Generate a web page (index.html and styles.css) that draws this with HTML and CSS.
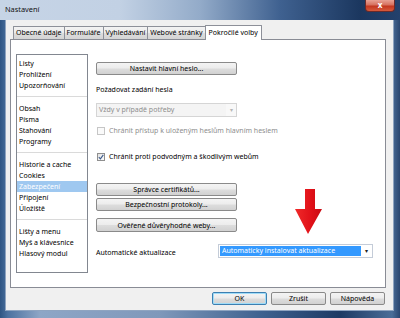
FILE: index.html
```html
<!doctype html>
<html lang="cs">
    <head>
        <meta charset="utf-8">
        <title>Nastavení</title>
        <link rel="stylesheet" href="styles.css">
    </head>
    <body>
        <div class="window">
            <div class="titlebar">
                <span class="title">Nastavení</span>
                <span class="close">x</span>
            </div>
            <div class="client">
                <div class="tabs">
                    <span class="tab">Obecné údaje</span>
                    <span class="tab">Formuláře</span>
                    <span class="tab">Vyhledávání</span>
                    <span class="tab">Webové stránky</span>
                    <span class="tab active">Pokročilé volby</span>
                </div>
                <div class="panel">
                    <ul class="categories">
                        <li>Listy</li>
                        <li>Prohlížení</li>
                        <li>Upozorňování</li>
                        <li class="sep"></li>
                        <li>Obsah</li>
                        <li>Písma</li>
                        <li>Stahování</li>
                        <li>Programy</li>
                        <li class="sep"></li>
                        <li>Historie a cache</li>
                        <li>Cookies</li>
                        <li class="selected">Zabezpečení</li>
                        <li>Připojení</li>
                        <li>Úložiště</li>
                        <li class="sep"></li>
                        <li>Lišty a menu</li>
                        <li>Myš a klávesnice</li>
                        <li>Hlasový modul</li>
                    </ul>
                    <div class="settings">
                        <button class="btn btn-master">Nastavit hlavní heslo...</button>
                        <div class="label label-ask">Požadovat zadání hesla</div>
                        <div class="select disabled">
                            <span class="select-text">Vždy v případě potřeby</span>
                            <span class="select-arrow">&#9662;</span>
                        </div>
                        <div class="check disabled check-protect">
                            <span class="box"></span>
                            <span>Chránit přístup k uloženým heslům hlavním heslem</span>
                        </div>
                        <div class="check check-web">
                            <span class="box checked">
                                <svg width="6" height="6" viewBox="0 0 6 6"><path d="M0.8 3.2 L2.4 4.8 L5.3 0.9" fill="none" stroke="#3c5a8c" stroke-width="1.1"/></svg>
                            </span>
                            <span>Chránit proti podvodným a škodlivým webům</span>
                        </div>
                        <button class="btn btn-certs">Správce certifikátů...</button>
                        <button class="btn btn-protocols">Bezpečnostní protokoly...</button>
                        <button class="btn btn-trusted">Ověřené důvěryhodné weby...</button>
                        <div class="update-row">
                            <span class="label">Automatické aktualizace</span>
                            <div class="select active">
                                <span class="select-text">Automaticky instalovat aktualizace</span>
                                <span class="select-arrow">&#9662;</span>
                            </div>
                        </div>
                    </div>
                    <svg class="arrow" width="30" height="48" viewBox="0 0 30 48">
                        <defs>
                            <linearGradient id="red" x1="0" y1="0" x2="1" y2="0">
                                <stop offset="0" stop-color="#f02a2a"/>
                                <stop offset="0.6" stop-color="#e01018"/>
                                <stop offset="1" stop-color="#c80a12"/>
                            </linearGradient>
                        </defs>
                        <path d="M11 1 L21 1 L21 21 L28 21 L14 46 L1 21 L11 21 Z" fill="url(#red)"/>
                    </svg>
                </div>
                <div class="actions">
                    <button class="btn btn-default">OK</button>
                    <button class="btn">Zrušit</button>
                    <button class="btn">Nápověda</button>
                </div>
            </div>
        </div>
    </body>
</html>
```

FILE: styles.css
```css
html, body{
    margin: 0px;
    padding: 0px;
    width: 400px;
    height: 318px;
    overflow: hidden;
}
body{
    font-family: "Noto Sans", "Open Sans", sans-serif;
    font-size: 7px;
    color: #000;
}
.window{
    width: 400px;
    height: 318px;
    box-sizing: border-box;
    padding: 0px 7px 8px 6px;
    background: linear-gradient(90deg, #2f5583 0%, #4d72a0 2%, #8ea6c6 10%, #7f98ba 40%, #3f6290 65%, #1d3a64 85%, #4a6d98 98%, #2a4670 100%);
    display: flex;
    flex-direction: column;
}
.titlebar{
    height: 20px;
    position: relative;
    margin: 0px -7px 0px -6px;
    background: linear-gradient(90deg, #c6d4e6 0%, #c2d1e4 30%, #93abc9 50%, #3f6190 70%, #1b375f 90%, #23416c 100%);
}
.title{
    position: absolute;
    left: 5px;
    top: 4px;
    font-size: 7.4px;
    color: #111;
}
.close{
    position: absolute;
    left: 365px;
    top: 0px;
    width: 30px;
    height: 12px;
    border: 1px solid #6a2a2a;
    border-top: none;
    border-radius: 0px 0px 4px 4px;
    box-sizing: border-box;
    background: linear-gradient(#e8a194 0%, #d6705e 45%, #c3361f 55%, #d65a3c 100%);
    color: #fff;
    font-size: 8px;
    font-weight: bold;
    text-align: center;
    line-height: 10px;
}
.client{
    flex: 1;
    background: #f0f0f0;
    box-sizing: border-box;
    padding: 5px 7px 0px 4px;
    display: flex;
    flex-direction: column;
    box-shadow: 0px 0px 0px 1px #8fa4c0;
}
.tabs{
    display: flex;
    align-items: flex-end;
    height: 14px;
    padding-left: 3px;
    position: relative;
    z-index: 1;
}
.tab{
    height: 13px;
    box-sizing: border-box;
    border: 1px solid #8d9099;
    border-bottom: none;
    margin-right: -1px;
    padding: 0px 2px;
    line-height: 12px;
    background: linear-gradient(#f3f3f3 0%, #ebebeb 50%, #dddddd 51%, #d4d4d4 100%);
    border-radius: 1px 1px 0px 0px;
}
.tab.active{
    height: 15px;
    margin-bottom: -1px;
    background: #fff;
    padding: 0px 3px;
    line-height: 13px;
}
.panel{
    height: 249px;
    box-sizing: border-box;
    border: 1px solid #898c95;
    background: #fff;
    display: flex;
    align-items: flex-start;
    padding-left: 5px;
    position: relative;
}
.categories{
    list-style: none;
    margin: 14px 0px 0px 0px;
    padding: 3px 0px 0px 0px;
    width: 72px;
    height: 219px;
    box-sizing: border-box;
    border: 1px solid #828790;
}
.categories li{
    height: 11px;
    line-height: 11px;
    padding-left: 2px;
    white-space: nowrap;
}
.categories li.sep{
    height: 12px;
    position: relative;
}
.categories li.sep::after{
    content: "";
    position: absolute;
    left: 0px;
    right: 0px;
    top: 5px;
    border-top: 1px solid #dadada;
}
.categories li.selected{
    background: #9fc8f0;
    color: #fff;
}
.settings{
    margin: 22px 0px 0px 8px;
    display: flex;
    flex-direction: column;
    width: 277px;
}
.btn{
    font-family: inherit;
    font-size: 7px;
    color: #000;
    height: 13px;
    padding: 0px;
    box-sizing: border-box;
    border: 1px solid #8a8a8a;
    border-radius: 2px;
    background: linear-gradient(#f4f4f4 0%, #ececec 48%, #dddddd 52%, #d1d1d1 100%);
    line-height: 11px;
    -webkit-appearance: none;
}
.settings .btn{
    width: 141px;
}
.label{
    line-height: 11px;
}
.label-ask{
    margin-top: 9px;
}
.select{
    height: 14px;
    box-sizing: border-box;
    display: flex;
    align-items: center;
    border: 1px solid #c9c9c9;
    line-height: 12px;
}
.select.disabled{
    margin-top: 8px;
    width: 141px;
    color: #8e8e8e;
    background: #f4f4f4;
    border-color: #d5d5d5;
}
.select-text{
    flex: 1;
    padding-left: 2px;
    white-space: nowrap;
}
.select-arrow{
    width: 10px;
    text-align: center;
    font-size: 6px;
    color: #222;
}
.select.disabled .select-arrow{
    color: #b5b5b5;
    background: #f8f8f8;
    align-self: stretch;
    line-height: 12px;
}
.check{
    display: flex;
    align-items: center;
    gap: 4px;
    line-height: 11px;
    padding-left: 1px;
    white-space: nowrap;
}
.check.disabled{
    color: #8e8e8e;
}
.check-protect{
    margin-top: 8px;
}
.check-web{
    margin-top: 15px;
}
.box{
    width: 6px;
    height: 6px;
    border: 1px solid #8f8f8f;
    background: linear-gradient(135deg, #e4e4e4, #fbfbfb);
    display: flex;
}
.check.disabled .box{
    border-color: #c6c6c6;
    background: #fafafa;
}
.btn-certs{
    margin-top: 21px;
}
.btn-protocols{
    margin-top: 2px;
}
.btn-trusted{
    margin-top: 7px;
    height: 14px;
}
.update-row{
    margin-top: 12px;
    display: flex;
    align-items: center;
}
.update-row .label{
    width: 122px;
    padding-top: 3px;
}
.select.active{
    width: 155px;
    background: #fff;
    border-color: #c4ccd8;
    padding: 1px;
}
.select.active .select-text{
    background: #3399ff;
    color: #fff;
    align-self: stretch;
    line-height: 10px;
}
.arrow{
    position: absolute;
    left: 283px;
    top: 148px;
}
.actions{
    display: flex;
    justify-content: flex-end;
    gap: 4px;
    margin-top: 4px;
    padding-right: 1px;
}
.actions .btn{
    width: 55px;
}
.btn-default{
    border-color: #3c7fb1;
    box-shadow: inset 0px 0px 0px 1px #9fdcf8;
}
```
